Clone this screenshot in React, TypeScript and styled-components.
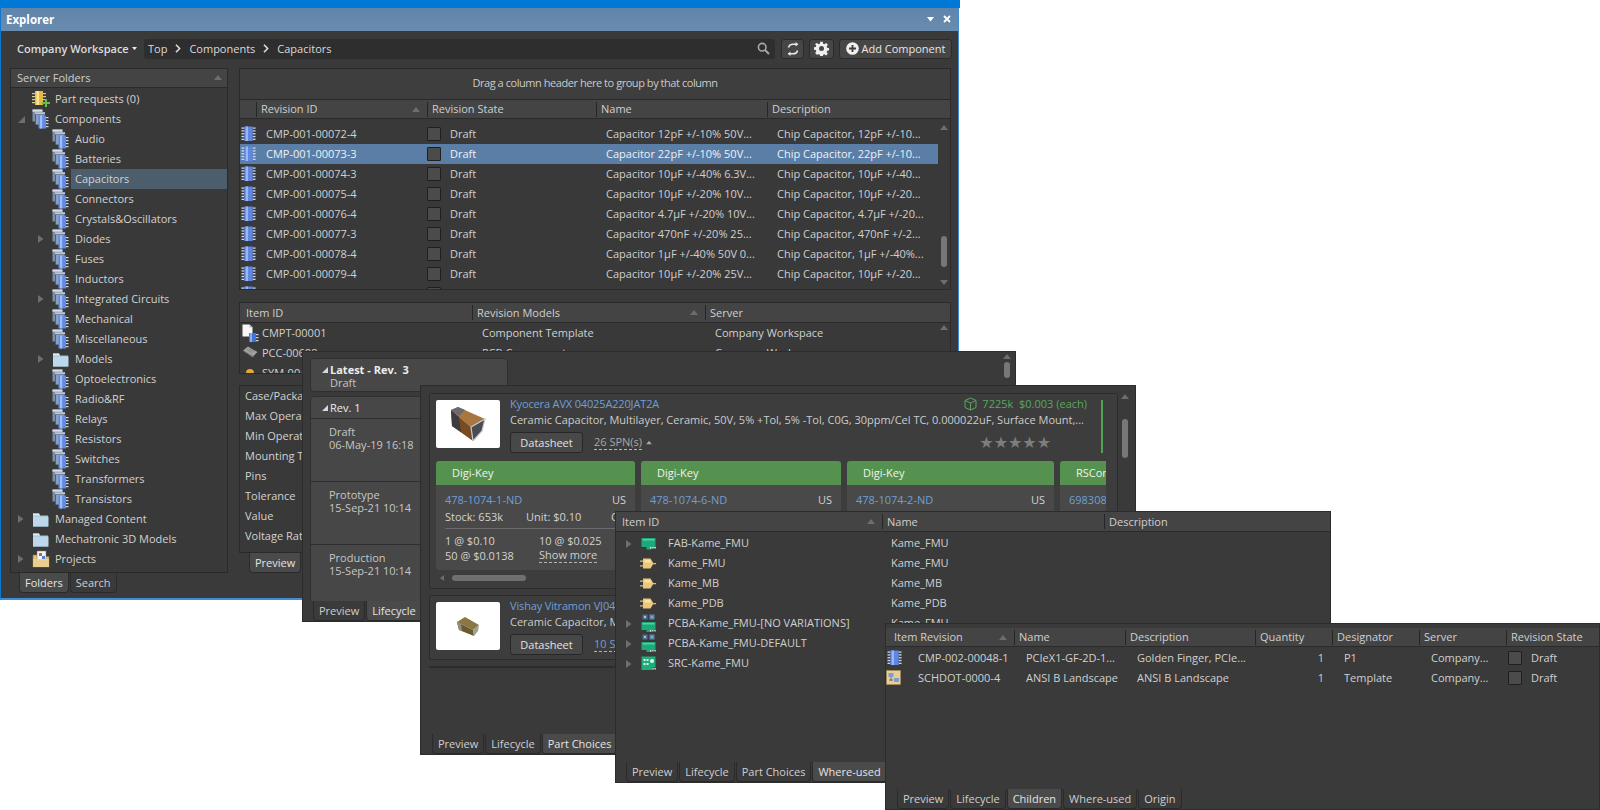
import React from "react";
import styled, { createGlobalStyle } from "styled-components";

const Global = createGlobalStyle`
  html, body { margin: 0; padding: 0; background: #fff; }
  body { font-family: "Open Sans", "Noto Sans", "Liberation Sans", sans-serif; font-size: 11px; color: #d2d2d2; }
  #root { width: 1600px; height: 810px; overflow: hidden; }
  * { box-sizing: border-box; }
`;

const Page = styled.div`
  position: relative;
  width: 1600px;
  height: 810px;
  overflow: hidden;
  background: #fff;
`;

const TopStrip = styled.div`
  height: 8px;
  width: 960px;
  background: #0078d7;
`;

const Window = styled.section<{ $x: number; $y: number; $w: number; $h: number }>`
  position: absolute;
  left: ${p => p.$x}px;
  top: ${p => p.$y}px;
  width: ${p => p.$w}px;
  height: ${p => p.$h}px;
  background: #3a3a3a;
  display: flex;
  flex-direction: column;
  overflow: hidden;
  border: 1px solid #2c2c2c;
`;

const ExplorerFrame = styled(Window)`
  border: none;
  border-left: 1px solid #0a78d0;
  border-bottom: 2px solid #3d8ed6;
  border-right: 1px solid #3d8ed6;
`;

const TitleBar = styled.header`
  height: 23px;
  flex: none;
  display: flex;
  align-items: center;
  justify-content: space-between;
  padding: 0 5px 1px 5px;
  background: linear-gradient(#5f84aa, #6a8cae);
  color: #fff;
  font-weight: 700;
  font-size: 11.5px;
`;

const TitleActions = styled.div`
  display: flex;
  align-items: center;
  gap: 9px;
  padding-right: 2px;
`;

const Toolbar = styled.div`
  height: 37px;
  flex: none;
  display: flex;
  align-items: center;
  padding: 0 6px 1px 16px;
`;

const Workspace = styled.div`
  width: 127px;
  flex: none;
  font-weight: 600;
  display: flex;
  align-items: center;
  gap: 3px;
  color: #dcdcdc;
  white-space: nowrap;
  padding-bottom: 1px;
`;

const SearchBox = styled.div`
  width: 631px;
  flex: none;
  height: 20px;
  background: #2e2e2e;
  border-radius: 3px;
  display: flex;
  align-items: center;
  padding: 0 5px 1px 4px;
  gap: 8px;
  color: #dadada;
`;

const Crumb = styled.span``;

const Spacer = styled.div`
  flex: 1;
`;

const ToolButton = styled.button<{ $w: number; $ml: number }>`
  width: ${p => p.$w}px;
  flex: none;
  margin-left: ${p => p.$ml}px;
  height: 20px;
  padding: 0 0 1px;
  background: #464646;
  border: 1px solid #2b2b2b;
  border-radius: 3px;
  color: #e6e6e6;
  font: inherit;
  display: flex;
  align-items: center;
  justify-content: center;
  gap: 3px;
`;

const ExplorerBody = styled.div`
  flex: 1;
  display: flex;
  padding: 0 6px 0 9px;
  gap: 11px;
`;

const LeftColumn = styled.div`
  width: 218px;
  flex: none;
  display: flex;
  flex-direction: column;
`;

const Panel = styled.div<{ $h: number }>`
  height: ${p => p.$h}px;
  flex: none;
  background: #393939;
  border: 1px solid #2a2a2a;
  overflow: hidden;
  position: relative;
`;

const PanelHead = styled.div`
  height: 19px;
  background: #444;
  border-bottom: 1px solid #2a2a2a;
  display: flex;
  align-items: center;
  justify-content: space-between;
  padding: 0 5px 1px 6px;
  color: #cfcfcf;
`;

const TreeRow = styled.div<{ $level: number; $selected?: boolean }>`
  height: 20px;
  display: grid;
  grid-template-columns: 17px 21px 1fr;
  align-items: center;
  margin-left: ${p => 2 + p.$level * 20}px;
  white-space: nowrap;
  > :last-child {
    background: ${p => (p.$selected ? "#4c5e6c" : "transparent")};
    height: 20px;
    line-height: 19px;
    padding-left: 4px;
  }
`;

const TreeList = styled.div`
  padding-top: 1px;
`;

const TreeArrow = styled.span`
  display: flex;
  justify-content: flex-start;
  padding-left: 5px;
`;

const TabStrip = styled.nav<{ $pl: number }>`
  display: flex;
  height: 20px;
  flex: none;
  padding-left: ${p => p.$pl}px;
`;

const Tab = styled.div<{ $active?: boolean }>`
  height: 20px;
  padding: 0 5px 1px;
  background: ${p => (p.$active ? "#4a4a4a" : "#3a3a3a")};
  border: 1px solid #2b2b2b;
  border-top: none;
  border-radius: 0 0 4px 4px;
  display: flex;
  align-items: center;
  margin-right: 1px;
  color: ${p => (p.$active ? "#e4e4e4" : "#cfcfcf")};
  white-space: nowrap;
`;

const RightColumn = styled.div`
  width: 712px;
  flex: none;
  display: flex;
  flex-direction: column;
`;

const DragHint = styled.div`
  height: 31px;
  display: flex;
  align-items: center;
  justify-content: center;
  padding-bottom: 3px;
  background: #3e3e3e;
  border-bottom: 1px solid #2a2a2a;
  color: #cacaca;
  letter-spacing: -0.45px;
`;

const GridHead = styled.div<{ $cols: string; $h?: number }>`
  height: ${p => p.$h ?? 20}px;
  flex: none;
  display: grid;
  grid-template-columns: ${p => p.$cols};
  background: #444;
  border-bottom: 1px solid #2a2a2a;
  align-items: center;
`;

const HeadCell = styled.div`
  height: 15px;
  line-height: 14px;
  border-left: 1px solid #262626;
  padding-left: 4px;
  padding-right: 7px;
  display: flex;
  justify-content: space-between;
  align-items: center;
  white-space: nowrap;
  overflow: hidden;
  color: #cfcfcf;
`;

const PlainHeadCell = styled(HeadCell)<{ $pl?: number }>`
  border-left: none;
  padding-left: ${p => p.$pl ?? 6}px;
`;

const GridRow = styled.div<{ $cols: string; $selected?: boolean }>`
  height: 20px;
  display: grid;
  grid-template-columns: ${p => p.$cols};
  align-items: center;
  white-space: nowrap;
  background: ${p => (p.$selected ? "#5a7ea6" : "transparent")};
  color: ${p => (p.$selected ? "#eef2f6" : "#d0d0d0")};
`;

const Cell = styled.div<{ $pl?: number; $pr?: number; $right?: boolean }>`
  padding-left: ${p => p.$pl ?? 10}px;
  padding-right: ${p => p.$pr ?? 0}px;
  overflow: hidden;
  line-height: 18px;
  text-align: ${p => (p.$right ? "right" : "left")};
`;

const StateCell = styled.div`
  display: flex;
  align-items: center;
  gap: 9px;
  line-height: 18px;
  height: 18px;
`;

const CheckBox = styled.span`
  width: 14px;
  height: 14px;
  background: #4b4b4b;
  border: 1px solid #1f1f1f;
  border-radius: 1px;
  flex: none;
`;

const IconCell = styled.div`
  display: flex;
  align-items: center;
  justify-content: center;
  height: 20px;
`;

const RowsArea = styled.div<{ $h: number; $pt: number; $w: number }>`
  height: ${p => p.$h}px;
  width: ${p => p.$w}px;
  padding-top: ${p => p.$pt}px;
  overflow: hidden;
`;

const ScrollRail = styled.div`
  position: absolute;
  right: 0;
  width: 13px;
  display: flex;
  flex-direction: column;
  align-items: center;
`;

const ArrowUp = styled.span<{ $c?: string }>`
  width: 0;
  height: 0;
  flex: none;
  border-left: 4px solid transparent;
  border-right: 4px solid transparent;
  border-bottom: 5px solid ${p => p.$c ?? "#6d6d6d"};
`;

const ArrowDown = styled(ArrowUp)`
  transform: rotate(180deg);
`;

const Thumb = styled.span<{ $h: number; $mt: number }>`
  width: 6px;
  height: ${p => p.$h}px;
  margin-top: ${p => p.$mt}px;
  border-radius: 3px;
  background: #777;
`;

const Stack = styled.div<{ $gap: number }>`
  height: ${p => p.$gap}px;
  flex: none;
`;

const PropRow = styled.div`
  height: 20px;
  line-height: 20px;
  padding-left: 5px;
  white-space: nowrap;
`;

/* Lifecycle */
const LifeBody = styled.div`
  flex: 1;
  padding: 6px 0 0 7px;
  position: relative;
  min-height: 0;
  overflow: hidden;
`;

const LifeCard = styled.div<{ $h: number }>`
  width: 198px;
  height: ${p => p.$h}px;
  background: #474747;
  border: 1px solid #2f2f2f;
  border-radius: 4px;
  margin-bottom: 4px;
  overflow: hidden;
`;

const LifeTitle = styled.div<{ $bold?: boolean }>`
  padding-left: 19px;
  display: flex;
  align-items: center;
  height: 21px;
  font-weight: ${p => (p.$bold ? 700 : 400)};
  color: #ececec;
  position: relative;
`;

const LifeFold = styled.span`
  width: 0;
  height: 0;
  position: absolute;
  left: 11px;
  top: 8px;
  border-left: 6px solid transparent;
  border-bottom: 6px solid #d8d8d8;
`;

const LifeSub = styled.div`
  padding-left: 19px;
  line-height: 13px;
  margin-top: -4px;
  color: #c4c4c4;
`;

const LifeStage = styled.div`
  height: 63px;
  border-top: 1px solid #2e2e2e;
  padding: 6px 0 0 18px;
  line-height: 13px;
  color: #c6c6c6;
  white-space: nowrap;
`;

/* Part choices */
const PartsBody = styled.div`
  flex: 1;
  padding: 7px 17px 0 8px;
  min-height: 0;
  overflow: hidden;
`;

const PartCard = styled.div<{ $h: number }>`
  height: ${p => p.$h}px;
  border: 1px solid #2c2c2c;
  border-radius: 2px;
  padding: 6px 6px 0 6px;
  margin-bottom: 6px;
  background: #3d3d3d;
  overflow: hidden;
`;

const PartTop = styled.div`
  display: grid;
  grid-template-columns: 64px 1fr;
  column-gap: 10px;
  height: 54px;
  position: relative;
`;

const PartImage = styled.div`
  width: 64px;
  height: 48px;
  background: #fff;
  border-radius: 2px;
  display: flex;
  align-items: center;
  justify-content: center;
`;

const PartName = styled.div`
  color: #6f9fd6;
  line-height: 16px;
  margin-top: -4px;
  white-space: nowrap;
  letter-spacing: -0.15px;
`;

const PartDesc = styled.div`
  line-height: 16px;
  white-space: nowrap;
  color: #cccccc;
`;

const DatasheetRow = styled.div`
  display: flex;
  align-items: center;
  margin-top: 4px;
  gap: 11px;
`;

const Datasheet = styled.button`
  width: 73px;
  height: 21px;
  padding: 0;
  background: #484848;
  color: #e2e2e2;
  font: inherit;
  border: 1px solid #272727;
  border-radius: 3px;
`;

const Dashed = styled.span<{ $c?: string }>`
  justify-self: start;
  border-bottom: 1px dashed #b5b5b5;
  line-height: 14px;
  color: ${p => p.$c ?? "#a8a8a8"};
`;

const TinyUp = styled(ArrowUp)`
  margin-left: -8px;
  transform: scale(0.7);
`;

const PriceBlock = styled.div`
  position: absolute;
  right: 24px;
  top: -4px;
  display: flex;
  align-items: center;
  gap: 5px;
  color: #57a85b;
  line-height: 16px;
`;

const Stars = styled.div`
  position: absolute;
  right: 60px;
  top: 35px;
  font-size: 16px;
  line-height: 16px;
  color: #7d7d7d;
  font-family: "DejaVu Sans", sans-serif;
`;

const GreenRule = styled.div`
  position: absolute;
  right: 8px;
  top: 0;
  width: 2px;
  height: 53px;
  background: #4fa352;
`;

const Suppliers = styled.div`
  display: flex;
  gap: 6px;
  margin-top: 7px;
  overflow: hidden;
  width: 670px;
`;

const Supplier = styled.article<{ $w: number }>`
  width: ${p => p.$w}px;
  flex: none;
  height: 109px;
  background: #494949;
  border-radius: 3px;
  overflow: hidden;
`;

const SupplierHead = styled.div`
  height: 24px;
  line-height: 23px;
  padding-left: 16px;
  background: #56924f;
  color: #eef3ec;
  white-space: nowrap;
`;

const SupplierBody = styled.div`
  padding: 6px 9px 0 9px;
  white-space: nowrap;
`;

const SupplierLine = styled.div`
  display: flex;
  justify-content: space-between;
  line-height: 17px;
`;

const StockLine = styled.div`
  display: grid;
  grid-template-columns: 81px 85px 1fr;
  line-height: 17px;
  border-bottom: 1px solid #6b6b6b;
  padding-bottom: 3px;
  margin-bottom: 4px;
`;

const PriceGrid = styled.div`
  display: grid;
  grid-template-columns: 94px 1fr;
  line-height: 15px;
`;

const Link = styled.span`
  color: #6f9fd6;
`;

const HScroll = styled.div`
  display: flex;
  align-items: center;
  height: 14px;
  gap: 8px;
  padding: 2px 0 0 4px;
`;

const HThumb = styled.span`
  width: 74px;
  height: 6px;
  background: #6f6f6f;
  border-radius: 3px;
`;

const ArrowLeft = styled.span`
  width: 0;
  height: 0;
  border-top: 3px solid transparent;
  border-bottom: 3px solid transparent;
  border-right: 4px solid #6d6d6d;
`;

const Fill = styled.div`
  flex: 1;
  min-height: 0;
  position: relative;
`;

const Divider = styled.div`
  height: 2px;
  background: #2c2c2c;
`;

const ChipIcon = () => (
  <svg width="15" height="18" viewBox="0 0 16 18">
    <g fill="#cfd6e4">
      {[2, 5, 8, 11, 14].map(y => (
        <g key={y}>
          <rect x="0.5" y={y} width="3" height="1.4" />
          <rect x="12.5" y={y} width="3" height="1.4" />
        </g>
      ))}
    </g>
    <rect x="3.5" y="1" width="9" height="15.5" fill="#5f86e0" />
    <rect x="5" y="1" width="2.5" height="15.5" fill="#9ab6f4" />
  </svg>
);

const FolderStack = () => (
  <svg width="17" height="20" viewBox="0 0 17 20">
    <rect x="0.5" y="0.5" width="10" height="12" fill="#7d8ea8" />
    <rect x="0.5" y="0.5" width="10" height="2.2" fill="#d6dde8" />
    <rect x="3" y="3.2" width="10" height="12.5" fill="#46505f" />
    <rect x="3" y="3.2" width="10" height="2" fill="#bcc8da" />
    <rect x="3.8" y="5.5" width="8.5" height="10" fill="#8ba0bf" />
    <rect x="6.5" y="6.5" width="7.5" height="13" fill="#5f8ae8" />
    <rect x="8" y="6.5" width="2.2" height="13" fill="#a2bcf4" />
    <g fill="#cfd6e4">
      {[8, 11, 14, 17].map(y => <rect key={y} x="14" y={y} width="2.5" height="1.2" />)}
    </g>
  </svg>
);

const PlainFolder = () => (
  <svg width="17" height="15" viewBox="0 0 17 15">
    <path d="M1 1.5h6l1 2h8v11H1z" fill="#9cc0d8" />
    <path d="M1 4.5h15.5v10H1z" fill="#bcd8ea" />
    <path d="M1 1.5h6l1 2H1z" fill="#dfe9f0" />
  </svg>
);

const PartRequestIcon = () => (
  <svg width="18" height="19" viewBox="0 0 18 19">
    <g fill="#d9cc8a">
      {[3, 6, 9, 12].map(y => (
        <g key={y}>
          <rect x="0" y={y} width="3" height="1.2" />
          <rect x="11" y={y} width="3" height="1.2" />
        </g>
      ))}
    </g>
    <rect x="3" y="1" width="8" height="14" fill="#e8b83a" />
    <rect x="4.5" y="1" width="2.5" height="14" fill="#f8e49a" />
    <path d="M10 12h3V9h2v3h3v2h-3v3h-2v-3h-3z" fill="#5fc04a" />
  </svg>
);

const ProjectsIcon = () => (
  <svg width="18" height="18" viewBox="0 0 18 18">
    <path d="M1 5h5l1 1.5h10V17H1z" fill="#e3c47f" stroke="#8a7140" strokeWidth=".6" />
    <rect x="5" y="1" width="9" height="10" fill="#f4f4f4" stroke="#777" strokeWidth=".5" />
    <rect x="7" y="3" width="3" height="3" fill="#d25a3a" />
    <rect x="10" y="6" width="3" height="3" fill="#4f7fd0" />
    <path d="M1 9h16v8H1z" fill="#ecd08f" opacity=".85" />
  </svg>
);

const TemplateFile = () => (
  <svg width="17" height="19" viewBox="0 0 17 19">
    <path d="M0.5 0.5h7l3 3v9h-10z" fill="#f7f7f7" />
    <path d="M7.5 0.5l3 3h-3z" fill="#bbb" />
    <rect x="7" y="9" width="7" height="9" fill="#3f74e0" />
    <rect x="8" y="9" width="2" height="9" fill="#8aaef2" />
    <g fill="#cfd6e4">{[10, 13, 16].map(y => <rect key={y} x="14" y={y} width="2.5" height="1.2" />)}</g>
  </svg>
);

const PccIcon = () => (
  <svg width="16" height="16" viewBox="0 0 16 16">
    <path d="M1 5.5L6 1.5l9.5 5.5-5 5z" fill="#a0a0a0" />
    <path d="M3 7l9 5M1 5.5l9.5 6.5" stroke="#6a6a6a" strokeWidth=".7" />
    <path d="M5 4.5l5 3M7 3.5l5 3" stroke="#7a7a7a" strokeWidth=".8" />
  </svg>
);

const SymIcon = () => (
  <svg width="16" height="16" viewBox="0 0 16 16">
    <path d="M1 8h3a4 4 0 0 1 8 0h3v2H1z" fill="#e6a92c" />
  </svg>
);

const Sync = () => (
  <svg width="14" height="14" viewBox="0 0 14 14" fill="none" stroke="#e8e8e8" strokeWidth="1.6">
    <path d="M2.5 5.5C3 3.4 4.7 2.2 7 2.2h4.5" />
    <path d="M9.5 0l2.8 2.2L9.5 4.5" fill="#e8e8e8" stroke="none" />
    <path d="M11.5 8.5C11 10.6 9.3 11.8 7 11.8H2.5" />
    <path d="M4.5 9.5L1.7 11.8 4.5 14" fill="#e8e8e8" stroke="none" />
  </svg>
);

const Gear = () => (
  <svg width="15" height="15" viewBox="0 0 24 24">
    <path
      fill="#efefef"
      fillRule="evenodd"
      d="M10 1h4l.6 3.2 2 .8L19.4 3l2.8 2.8-2 2.8.8 2 3 .5v4l-3 .6-.8 2 1.9 2.7-2.8 2.8-2.7-1.9-2 .8-.6 3h-4l-.6-3-2-.8L4.6 22l-2.8-2.8 1.9-2.7-.8-2-3-.6v-4l3-.5.8-2-2-2.8L4.6 3l2.8 2 2-.8zM12 8a4 4 0 1 0 0 8 4 4 0 0 0 0-8z"
    />
  </svg>
);

const PlusCircle = () => (
  <svg width="13" height="13" viewBox="0 0 14 14">
    <circle cx="7" cy="7" r="6.8" fill="#f0f0f0" />
    <path d="M6 3.2h2V6h2.8v2H8v2.8H6V8H3.2V6H6z" fill="#3f3f3f" />
  </svg>
);

const Search = () => (
  <svg width="13" height="13" viewBox="0 0 13 13" fill="none" stroke="#a8a8a8" strokeWidth="1.6">
    <circle cx="5.2" cy="5.2" r="3.8" />
    <path d="M8 8l4 4" strokeWidth="2" />
  </svg>
);

const CaretDown = ({ c = "#e8e8e8", w = 7 }: { c?: string; w?: number }) => (
  <svg width={w} height={(w * 5) / 7} viewBox="0 0 7 5">
    <path d="M0 0h7L3.5 4.5z" fill={c} />
  </svg>
);

const CloseX = () => (
  <svg width="8" height="8" viewBox="0 0 8 8">
    <path d="M1 1l6 6M7 1L1 7" stroke="#fff" strokeWidth="1.8" />
  </svg>
);

const Chevron = () => (
  <svg width="6" height="9" viewBox="0 0 6 9" fill="none" stroke="#dedede" strokeWidth="1.6">
    <path d="M1 0.8L4.6 4.5 1 8.2" />
  </svg>
);

const RightTri = () => (
  <svg width="6" height="8" viewBox="0 0 6 8">
    <path d="M0 0l5.5 4L0 8z" fill="#6e6e6e" />
  </svg>
);

const OpenTri = () => (
  <svg width="7" height="7" viewBox="0 0 7 7">
    <path d="M7 0v7H0z" fill="#6e6e6e" />
  </svg>
);

const BoardIcon = () => (
  <svg width="15" height="13" viewBox="0 0 15 13">
    <path d="M0.5 1h14v10h-4v1.5h-5V10H.5z" fill="#1da97a" />
    <path d="M1.5 2h12v1.5h-12z" fill="#4fd0a6" />
    <path d="M9 10h1.4v1.4H9zm2.2 0h1.4v1.4h-1.4zm2.2 0h1.4v1.4h-1.4z" fill="#d5f5e8" />
  </svg>
);

const ModuleIcon = () => (
  <svg width="16" height="11" viewBox="0 0 16 11">
    <path d="M0 2.5h3.5v1.2H0zM0 7.3h3.5v1.2H0zM12.5 5h3.5v1.2h-3.5z" fill="#d9bf80" />
    <path d="M3 0.5h7.5L13.5 5.5l-3 5H3z" fill="#ecc978" />
    <path d="M4.5 2h5.5l1.5 2.5h-7z" fill="#f8e2a6" />
  </svg>
);

const PcbaIcon = () => (
  <svg width="15" height="19" viewBox="0 0 15 19">
    <rect x="1.5" y="0.5" width="5" height="5" fill="#4e6f96" />
    <rect x="8.5" y="0.5" width="5" height="5" fill="#5f86ad" />
    <path d="M3 2l2 2M5 2L3 4M10 3h2" stroke="#c6d6e6" strokeWidth=".8" />
    <path d="M0.5 8h14v8h-4v2h-5v-2h-5z" fill="#1da97a" />
    <path d="M1.5 9h12v1.5h-12z" fill="#4fd0a6" />
    <path d="M9 16h1.3v1.4H9zm2.2 0h1.3v1.4h-1.3zm2.2 0h1.3v1.4h-1.3z" fill="#d5f5e8" />
  </svg>
);

const SrcIcon = () => (
  <svg width="15" height="15" viewBox="0 0 15 15">
    <path d="M0.5 0.5h14v11h-3v2.5H0.5z" fill="#1eae7c" />
    <path d="M2.5 3h2v2h-2zM5.5 3h2v2h-2zM2.5 7h2v2h-2zM5.5 7h2v2h-2z" fill="#d8f6ea" />
    <circle cx="11" cy="5" r="2" fill="#d8f6ea" />
    <path d="M11.5 12h1.3v1.4h-1.3zm2 0h1.3v1.4h-1.3z" fill="#d5f5e8" />
  </svg>
);

const SheetIcon = () => (
  <svg width="16" height="16" viewBox="0 0 16 16">
    <rect x="0.5" y="0.5" width="14" height="14" fill="#e7cf95" stroke="#a88f55" strokeWidth=".6" />
    <rect x="2.5" y="3" width="5" height="4" fill="#7f9ad6" />
    <rect x="8" y="8" width="5" height="4" fill="#7f9ad6" />
    <path d="M3 10h4M5 7v4" stroke="#555" strokeWidth=".8" />
  </svg>
);

const CubeIcon = () => (
  <svg width="13" height="14" viewBox="0 0 13 14" fill="none" stroke="#57a85b" strokeWidth="1">
    <path d="M6.5 1L12 3.5v7L6.5 13 1 10.5v-7z" />
    <path d="M1 3.5L6.5 6 12 3.5M6.5 6v7" />
  </svg>
);

const CapacitorBig = () => (
  <svg width="35" height="34" viewBox="0 0 35 34">
    <path d="M0 3L7 0l27 12-14 8z" fill="#a8763f" />
    <path d="M0 3l20 17 2 14L1 19z" fill="#7a4a22" />
    <path d="M0 3l8 7 2 15-9-6z" fill="#3c3c40" />
    <path d="M0 3L7 0l7 3-6 6z" fill="#6a6a70" />
    <path d="M20 20l14-8-3 12-9 10z" fill="#4a4c52" stroke="#c4c8d0" strokeWidth="1.2" />
  </svg>
);

const CapacitorSmall = () => (
  <svg width="24" height="21" viewBox="0 0 24 21">
    <path d="M1 6L9 1l14 8-6 5z" fill="#8a7744" />
    <path d="M1 6l16 8 1 6-15-6z" fill="#6a5a30" />
    <path d="M17 14l6-5-1 6-4 5z" fill="#a0a090" />
    <path d="M1 6l2 8 3 1-1-7z" fill="#8f8f80" />
  </svg>
);

type T = { name: string; level: number; icon: "stack" | "folder" | "req" | "proj"; arrow?: "r" | "o"; selected?: boolean };

const tree: T[] = [
  { name: "Part requests (0)", level: 0, icon: "req" },
  { name: "Components", level: 0, icon: "stack", arrow: "o" },
  { name: "Audio", level: 1, icon: "stack" },
  { name: "Batteries", level: 1, icon: "stack" },
  { name: "Capacitors", level: 1, icon: "stack", selected: true },
  { name: "Connectors", level: 1, icon: "stack" },
  { name: "Crystals&Oscillators", level: 1, icon: "stack" },
  { name: "Diodes", level: 1, icon: "stack", arrow: "r" },
  { name: "Fuses", level: 1, icon: "stack" },
  { name: "Inductors", level: 1, icon: "stack" },
  { name: "Integrated Circuits", level: 1, icon: "stack", arrow: "r" },
  { name: "Mechanical", level: 1, icon: "stack" },
  { name: "Miscellaneous", level: 1, icon: "stack" },
  { name: "Models", level: 1, icon: "folder", arrow: "r" },
  { name: "Optoelectronics", level: 1, icon: "stack" },
  { name: "Radio&RF", level: 1, icon: "stack" },
  { name: "Relays", level: 1, icon: "stack" },
  { name: "Resistors", level: 1, icon: "stack" },
  { name: "Switches", level: 1, icon: "stack" },
  { name: "Transformers", level: 1, icon: "stack" },
  { name: "Transistors", level: 1, icon: "stack" },
  { name: "Managed Content", level: 0, icon: "folder", arrow: "r" },
  { name: "Mechatronic 3D Models", level: 0, icon: "folder" },
  { name: "Projects", level: 0, icon: "proj", arrow: "r" },
];

const treeIcon = (i: T["icon"]) =>
  i === "stack" ? <FolderStack /> : i === "folder" ? <PlainFolder /> : i === "req" ? <PartRequestIcon /> : <ProjectsIcon />;

const revisions = [
  ["CMP-001-00072-4", "Capacitor 12pF +/-10% 50V...", "Chip Capacitor, 12pF +/-10..."],
  ["CMP-001-00073-3", "Capacitor 22pF +/-10% 50V...", "Chip Capacitor, 22pF +/-10..."],
  ["CMP-001-00074-3", "Capacitor 10µF +/-40% 6.3V...", "Chip Capacitor, 10µF +/-40..."],
  ["CMP-001-00075-4", "Capacitor 10µF +/-20% 10V...", "Chip Capacitor, 10µF +/-20..."],
  ["CMP-001-00076-4", "Capacitor 4.7µF +/-20% 10V...", "Chip Capacitor, 4.7µF +/-20..."],
  ["CMP-001-00077-3", "Capacitor 470nF +/-20% 25...", "Chip Capacitor, 470nF +/-2..."],
  ["CMP-001-00078-4", "Capacitor 1µF +/-40% 50V 0...", "Chip Capacitor, 1µF +/-40%..."],
  ["CMP-001-00079-4", "Capacitor 10µF +/-20% 25V...", "Chip Capacitor, 10µF +/-20..."],
  ["CMP-001-00080-4", "Capacitor 10µF +/-20% 25V...", "Chip Capacitor, 10µF +/-20..."],
];

const revCols = "16px 171px 169px 171px 171px";
const itemCols = "232px 233px 230px";
const usedCols = "266px 222px 1fr";
const childHeadCols = "128px 111px 130px 77px 87px 87px 93px";
const childCols = "130px 111px 130px 77px 87px 87px 93px";

const Tabs = ({ names, active, pl }: { names: string[]; active: string; pl: number }) => (
  <TabStrip $pl={pl}>
    {names.map(n => (
      <Tab key={n} $active={n === active}>{n}</Tab>
    ))}
  </TabStrip>
);

const SupplierCard = ({ w, sku, name = "Digi-Key" }: { w: number; sku: string; name?: string }) => (
  <Supplier $w={w}>
    <SupplierHead>{name}</SupplierHead>
    <SupplierBody>
      <SupplierLine>
        <Link>{sku}</Link>
        <span>US</span>
      </SupplierLine>
      <StockLine>
        <span>Stock: 653k</span>
        <span>Unit: $0.10</span>
        <span>Cut Tape</span>
      </StockLine>
      <PriceGrid>
        <span>1 @ $0.10</span>
        <span>10 @ $0.025</span>
        <span>50 @ $0.0138</span>
        <Dashed $c="#d0d0d0">Show more</Dashed>
      </PriceGrid>
    </SupplierBody>
  </Supplier>
);

const used: [string, React.ReactNode, boolean][] = [
  ["FAB-Kame_FMU", <BoardIcon />, true],
  ["Kame_FMU", <ModuleIcon />, false],
  ["Kame_MB", <ModuleIcon />, false],
  ["Kame_PDB", <ModuleIcon />, false],
  ["PCBA-Kame_FMU-[NO VARIATIONS]", <PcbaIcon />, true],
  ["PCBA-Kame_FMU-DEFAULT", <PcbaIcon />, true],
  ["SRC-Kame_FMU", <SrcIcon />, true],
];
const usedNames = ["Kame_FMU", "Kame_FMU", "Kame_MB", "Kame_PDB", "Kame_FMU", "", ""];

const UsedName = styled.div`
  display: grid;
  grid-template-columns: 11px 22px 1fr;
  align-items: center;
  padding-left: 10px;
`;

const IdentGrid = styled.div<{ $icon: number }>`
  display: grid;
  grid-template-columns: ${p => p.$icon}px 1fr;
  align-items: center;
`;

function UsedIdent({ icon, name }: { icon: React.ReactNode; name: string }) {
  return (
    <IdentGrid $icon={20}>
      <IconCell>{icon}</IconCell>
      <Cell $pl={2}>{name}</Cell>
    </IdentGrid>
  );
}

function ChildIdent({ icon, name }: { icon: React.ReactNode; name: string }) {
  return (
    <IdentGrid $icon={16}>
      <IconCell>{icon}</IconCell>
      <Cell $pl={16}>{name}</Cell>
    </IdentGrid>
  );
}

export default function App() {
  return (
    <Page>
      <Global />
      <TopStrip />

      <ExplorerFrame $x={0} $y={8} $w={959} $h={592}>
        <TitleBar>
          <span>Explorer</span>
          <TitleActions>
            <CaretDown c="#fff" />
            <CloseX />
          </TitleActions>
        </TitleBar>
        <Toolbar>
          <Workspace>
            Company Workspace <CaretDown w={5} />
          </Workspace>
          <SearchBox>
            <Crumb>Top</Crumb>
            <Chevron />
            <Crumb>Components</Crumb>
            <Chevron />
            <Crumb>Capacitors</Crumb>
            <Spacer />
            <Search />
          </SearchBox>
          <ToolButton $w={23} $ml={6}><Sync /></ToolButton>
          <ToolButton $w={25} $ml={5}><Gear /></ToolButton>
          <ToolButton $w={113} $ml={5}><PlusCircle /> Add Component</ToolButton>
        </Toolbar>
        <ExplorerBody>
          <LeftColumn>
            <Panel $h={505}>
              <PanelHead>
                Server Folders
                <ArrowUp />
              </PanelHead>
              <TreeList>
                {tree.map(t => (
                  <TreeRow key={t.name} $level={t.level} $selected={t.selected}>
                    <TreeArrow>{t.arrow === "r" ? <RightTri /> : t.arrow === "o" ? <OpenTri /> : null}</TreeArrow>
                    <IconCell>{treeIcon(t.icon)}</IconCell>
                    <span>{t.name}</span>
                  </TreeRow>
                ))}
              </TreeList>
            </Panel>
            <Tabs names={["Folders", "Search"]} active="Folders" pl={9} />
          </LeftColumn>

          <RightColumn>
            <Panel $h={222}>
              <DragHint>Drag a column header here to group by that column</DragHint>
              <GridHead $cols={revCols} $h={19}>
                <PlainHeadCell />
                <HeadCell>Revision ID <ArrowUp /></HeadCell>
                <HeadCell>Revision State</HeadCell>
                <HeadCell>Name</HeadCell>
                <HeadCell>Description</HeadCell>
              </GridHead>
              <ScrollRail style={{ top: 56, height: 160 }}>
                <ArrowUp />
                <Thumb $h={31} $mt={106} />
                <Spacer />
                <ArrowDown />
              </ScrollRail>
              <RowsArea $h={170} $pt={5} $w={698}>
                {revisions.map((r, i) => (
                  <GridRow key={r[0]} $cols={revCols} $selected={i === 1}>
                    <IconCell><ChipIcon /></IconCell>
                    <Cell>{r[0]}</Cell>
                    <StateCell><CheckBox /><span>Draft</span></StateCell>
                    <Cell>{r[1]}</Cell>
                    <Cell>{r[2]}</Cell>
                  </GridRow>
                ))}
              </RowsArea>
            </Panel>
            <Stack $gap={12} />
            <Panel $h={72}>
              <GridHead $cols={itemCols}>
                <PlainHeadCell>Item ID</PlainHeadCell>
                <HeadCell>Revision Models <ArrowUp /></HeadCell>
                <HeadCell>Server</HeadCell>
              </GridHead>
              <ScrollRail style={{ top: 22, height: 40 }}>
                <ArrowUp />
              </ScrollRail>
              <RowsArea $h={50} $pt={0} $w={698}>
                <GridRow $cols={itemCols}>
                  <UsedIdent icon={<TemplateFile />} name="CMPT-00001" />
                  <Cell>Component Template</Cell>
                  <Cell>Company Workspace</Cell>
                </GridRow>
                <GridRow $cols={itemCols}>
                  <UsedIdent icon={<PccIcon />} name="PCC-00698" />
                  <Cell>PCB Component</Cell>
                  <Cell>Company Workspace</Cell>
                </GridRow>
                <GridRow $cols={itemCols}>
                  <UsedIdent icon={<SymIcon />} name="SYM-00432" />
                  <Cell>Symbol</Cell>
                  <Cell>Company Workspace</Cell>
                </GridRow>
              </RowsArea>
            </Panel>
            <Stack $gap={11} />
            <Panel $h={168}>
              {["Case/Package", "Max Operating Temperature", "Min Operating Temperature", "Mounting Type", "Pins", "Tolerance", "Value", "Voltage Rating"].map(n => (
                <PropRow key={n}>{n}</PropRow>
              ))}
            </Panel>
            <Tabs names={["Preview"]} active="Preview" pl={10} />
          </RightColumn>
        </ExplorerBody>
      </ExplorerFrame>

      <Window $x={302} $y={351} $w={714} $h={271}>
        <LifeBody>
          <LifeCard $h={34}>
            <LifeTitle $bold><LifeFold />Latest - Rev.&nbsp; 3</LifeTitle>
            <LifeSub>Draft</LifeSub>
          </LifeCard>
          <LifeCard $h={240}>
            <LifeTitle><LifeFold />Rev. 1</LifeTitle>
            <LifeStage>Draft<br />06-May-19 16:18</LifeStage>
            <LifeStage>Prototype<br />15-Sep-21 10:14</LifeStage>
            <LifeStage>Production<br />15-Sep-21 10:14</LifeStage>
          </LifeCard>
          <ScrollRail style={{ top: 2, height: 40, right: 2 }}>
            <ArrowUp />
            <Thumb $h={16} $mt={3} />
          </ScrollRail>
        </LifeBody>
        <Tabs names={["Preview", "Lifecycle"]} active="Lifecycle" pl={10} />
      </Window>

      <Window $x={420} $y={385} $w={716} $h={370}>
        <PartsBody>
          <PartCard $h={196}>
            <PartTop>
              <PartImage><CapacitorBig /></PartImage>
              <div>
                <PartName>Kyocera AVX 04025A220JAT2A</PartName>
                <PartDesc>Ceramic Capacitor, Multilayer, Ceramic, 50V, 5% +Tol, 5% -Tol, C0G, 30ppm/Cel TC, 0.000022uF, Surface Mount,...</PartDesc>
                <DatasheetRow>
                  <Datasheet>Datasheet</Datasheet>
                  <Dashed>26 SPN(s)</Dashed>
                  <TinyUp $c="#a8a8a8" />
                </DatasheetRow>
              </div>
              <PriceBlock><CubeIcon /> 7225k&nbsp; $0.003 (each)</PriceBlock>
              <Stars>★★★★★</Stars>
              <GreenRule />
            </PartTop>
            <Suppliers>
              <SupplierCard w={199} sku="478-1074-1-ND" />
              <SupplierCard w={200} sku="478-1074-6-ND" />
              <SupplierCard w={207} sku="478-1074-2-ND" />
              <SupplierCard w={60} sku="698308" name="RSComponents" />
            </Suppliers>
            <HScroll><ArrowLeft /><HThumb /></HScroll>
          </PartCard>
          <PartCard $h={65}>
            <PartTop>
              <PartImage><CapacitorSmall /></PartImage>
              <div>
                <PartName>Vishay Vitramon VJ0402A220JXACW1BC</PartName>
                <PartDesc>Ceramic Capacitor, Multilayer, Ceramic, 50V, 5% +Tol, 5% -Tol, C0G</PartDesc>
                <DatasheetRow>
                  <Datasheet>Datasheet</Datasheet>
                  <Dashed $c="#6f9fd6">10 SPN(s)</Dashed>
                </DatasheetRow>
              </div>
            </PartTop>
          </PartCard>
          <Divider />
        </PartsBody>
        <ScrollRail style={{ top: 8, height: 80, right: 4 }}>
          <ArrowUp />
          <Thumb $h={39} $mt={20} />
        </ScrollRail>
        <Tabs names={["Preview", "Lifecycle", "Part Choices"]} active="Part Choices" pl={11} />
      </Window>

      <Window $x={615} $y={511} $w={716} $h={272}>
        <GridHead $cols={usedCols}>
          <PlainHeadCell>Item ID <ArrowUp /></PlainHeadCell>
          <HeadCell>Name</HeadCell>
          <HeadCell>Description</HeadCell>
        </GridHead>
        <Fill>
          <Stack $gap={1} />
          {used.map((u, i) => (
            <GridRow key={u[0] as string} $cols={usedCols}>
              <UsedName>
                <span>{u[2] ? <RightTri /> : null}</span>
                <IconCell>{u[1]}</IconCell>
                <Cell $pl={9}>{u[0]}</Cell>
              </UsedName>
              <Cell $pl={9}>{usedNames[i]}</Cell>
              <Cell />
            </GridRow>
          ))}
        </Fill>
        <Tabs names={["Preview", "Lifecycle", "Part Choices", "Where-used"]} active="Where-used" pl={10} />
      </Window>

      <Window $x={885} $y={623} $w={715} $h={187}>
        <Stack $gap={4} />
        <GridHead $cols={childHeadCols} $h={19}>
          <PlainHeadCell $pl={8}>Item Revision <ArrowUp /></PlainHeadCell>
          <HeadCell>Name</HeadCell>
          <HeadCell>Description</HeadCell>
          <HeadCell>Quantity</HeadCell>
          <HeadCell>Designator</HeadCell>
          <HeadCell>Server</HeadCell>
          <HeadCell>Revision State</HeadCell>
        </GridHead>
        <Fill>
          <Stack $gap={1} />
          <GridRow $cols={childCols}>
            <ChildIdent icon={<ChipIcon />} name="CMP-002-00048-1" />
            <Cell>PCIeX1-GF-2D-1...</Cell>
            <Cell>Golden Finger, PCIe...</Cell>
            <Cell $right $pr={10}>1</Cell>
            <Cell>P1</Cell>
            <Cell>Company...</Cell>
            <StateCell><CheckBox /><span>Draft</span></StateCell>
          </GridRow>
          <GridRow $cols={childCols}>
            <ChildIdent icon={<SheetIcon />} name="SCHDOT-0000-4" />
            <Cell>ANSI B Landscape</Cell>
            <Cell>ANSI B Landscape</Cell>
            <Cell $right $pr={10}>1</Cell>
            <Cell>Template</Cell>
            <Cell>Company...</Cell>
            <StateCell><CheckBox /><span>Draft</span></StateCell>
          </GridRow>
        </Fill>
        <Tabs names={["Preview", "Lifecycle", "Children", "Where-used", "Origin"]} active="Children" pl={11} />
      </Window>
    </Page>
  );
}
